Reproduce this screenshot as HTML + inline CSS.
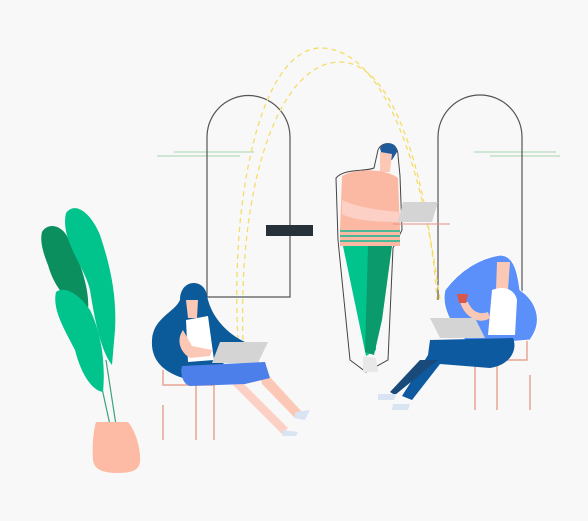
<!DOCTYPE html>
<html><head><meta charset="utf-8"><style>
html,body{margin:0;padding:0;background:#f8f8f8;width:588px;height:521px;overflow:hidden}
svg{display:block}
</style></head><body>
<svg width="588" height="521" viewBox="0 0 588 521" xmlns="http://www.w3.org/2000/svg">
<rect width="588" height="521" fill="#f8f8f8"/>
<g stroke="#a8d4b0" stroke-width="1">
<line x1="157" y1="156" x2="240" y2="156"/><line x1="174" y1="152" x2="254" y2="152"/>
<line x1="474" y1="152" x2="556" y2="152"/><line x1="490" y1="156" x2="560" y2="156"/>
</g>
<g fill="none" stroke="#555" stroke-width="1.2">
<path d="M207 297 V137 A41.5 41.5 0 0 1 290 137 V297 Z"/>
<path d="M438 300 V137 A42 42 0 0 1 522 137 V300"/>
</g>
<rect x="266" y="225" width="47" height="11" fill="#27313a"/>
<g fill="none" stroke="#f5dc6a" stroke-width="1.3" stroke-dasharray="5 4">
<path d="M238 340 C230 200 260 50 320 48 C380 48 420 150 440 300"/>
<path d="M243 340 C238 180 280 62 340 62 C400 62 430 200 437 300"/>
</g>
<path d="M336 178 C345 168 365 172 374 168 L378 150 C382 140 398 142 398 155 L400 176 L402 230 L393 248 L388 360 L366 372 L350 360 L338 240 Z" fill="#f8f8f8" stroke="#444" stroke-width="1"/>
<path d="M380 148 C384 140 398 142 397 152 L392 160 L383 160 Z" fill="#1f5a9a"/>
<path d="M380 152 L392 154 L390 172 L380 172 Z" fill="#fbc8b6"/>
<path d="M342 176 C355 168 385 168 398 178 L400 230 L340 230 Z" fill="#fbb9a4"/>
<path d="M342 200 C352 205 372 210 400 212 L400 222 C375 222 352 220 342 214 Z" fill="#fcd0c4"/>
<rect x="340" y="228" width="60" height="18" fill="#fbb9a4"/>
<g fill="#4cb898"><rect x="340" y="230" width="60" height="2"/><rect x="340" y="235" width="60" height="2"/><rect x="340" y="240" width="60" height="2"/></g>
<path d="M343 246 H372 L376 350 L366 356 Z" fill="#00c48c"/>
<path d="M368 246 H392 L382 320 L374 355 L365 352 Z" fill="#0b9a6b"/>
<path d="M363 356 L376 358 L378 372 L363 372 Z" fill="#e8e8e8"/>
<path d="M403 202 H438 L432 222 H398 Z" fill="#d4d4d4"/>
<line x1="393" y1="224" x2="450" y2="224" stroke="#e7918a" stroke-width="1"/>
<g stroke="#e7a594" stroke-width="1.5" fill="none">
<path d="M163 370 V385 H214 V440"/><line x1="196" y1="385" x2="196" y2="440"/><line x1="163" y1="405" x2="163" y2="440"/>
</g>
<path d="M180 300 C180 278 205 278 207 296 C212 320 230 335 245 342 L205 382 C180 380 150 370 152 340 C153 318 175 312 180 300 Z" fill="#0b5a9a"/>
<path d="M186 320 L208 316 L214 360 L188 362 Z" fill="#fff"/>
<path d="M186 300 L198 300 L197 318 L188 318 Z" fill="#fbc8b6"/>
<path d="M183 330 C176 340 180 352 190 358 L210 356 L212 350 L192 346 Z" fill="#fbc8b6"/>
<path d="M220 342 H268 L258 363 H212 Z" fill="#d4d4d4"/>
<path d="M258 364 L302 412 L295 418 L262 384 Z" fill="#fbc8b6"/>
<path d="M240 380 L288 428 L282 434 L232 384 Z" fill="#fcd0c4"/>
<path d="M182 366 L265 362 L270 378 L245 384 L190 386 C182 384 180 372 182 366 Z" fill="#4d7fea"/>
<path d="M296 412 L310 410 L305 420 L294 418 Z M283 430 L298 432 L296 436 H282 Z" fill="#d8e4f2"/>
<g stroke="#e7a594" stroke-width="1.5" fill="none">
<path d="M475 410 V360 H527 V340"/><line x1="497" y1="360" x2="497" y2="410"/><line x1="530" y1="375" x2="530" y2="410"/>
</g>
<path d="M445 290 C460 270 480 258 500 255 C515 255 518 275 520 290 C535 300 545 320 530 340 L470 345 C455 330 440 310 445 290 Z" fill="#5b8ff9" stroke="#fff" stroke-width="1"/>
<path d="M497 262 L510 262 L508 290 L496 290 Z" fill="#fbc8b6"/>
<path d="M492 290 C505 285 515 290 517 300 L515 335 L488 335 Z" fill="#fff"/>
<path d="M460 302 C465 318 480 325 490 318 L488 312 C480 315 472 312 468 302 Z" fill="#fbc8b6"/>
<path d="M457 294 H468 L466 303 H459 Z" fill="#d9564a"/>
<path d="M430 318 H475 L485 338 H440 Z" fill="#d4d4d4"/>
<path d="M430 340 L513 338 C518 350 510 365 490 368 L440 364 L412 400 L402 396 L428 355 Z" fill="#0e5aa0"/>
<path d="M420 360 L438 360 L395 395 L390 392 Z" fill="#1a4a7a"/>
<path d="M378 394 H396 L394 400 H378 Z M393 404 H410 L408 410 H392 Z" fill="#d8e4f2"/>
<path d="M98 370 L110 425 M106 360 L116 425" stroke="#3aa37b" stroke-width="1.2" fill="none"/>
<path d="M42 232 C48 222 62 225 68 238 C80 260 90 290 88 310 C70 305 55 290 48 265 C42 250 40 240 42 232 Z" fill="#0b8f5f"/>
<path d="M66 213 C76 200 92 215 100 235 C110 265 117 295 115 330 L112 365 C100 350 94 315 90 290 C84 265 60 240 66 213 Z" fill="#00c48c"/>
<path d="M56 292 C65 285 80 295 90 310 C100 330 106 360 103 392 C90 390 80 370 75 350 C65 330 52 310 56 292 Z" fill="#00c48c"/>
<path d="M96 422 H128 C135 430 141 448 140 462 C139 470 132 473 118 473 C104 473 94 470 93 460 C92 448 93 432 96 422 Z" fill="#fdbba5"/>
</svg>
</body></html>
